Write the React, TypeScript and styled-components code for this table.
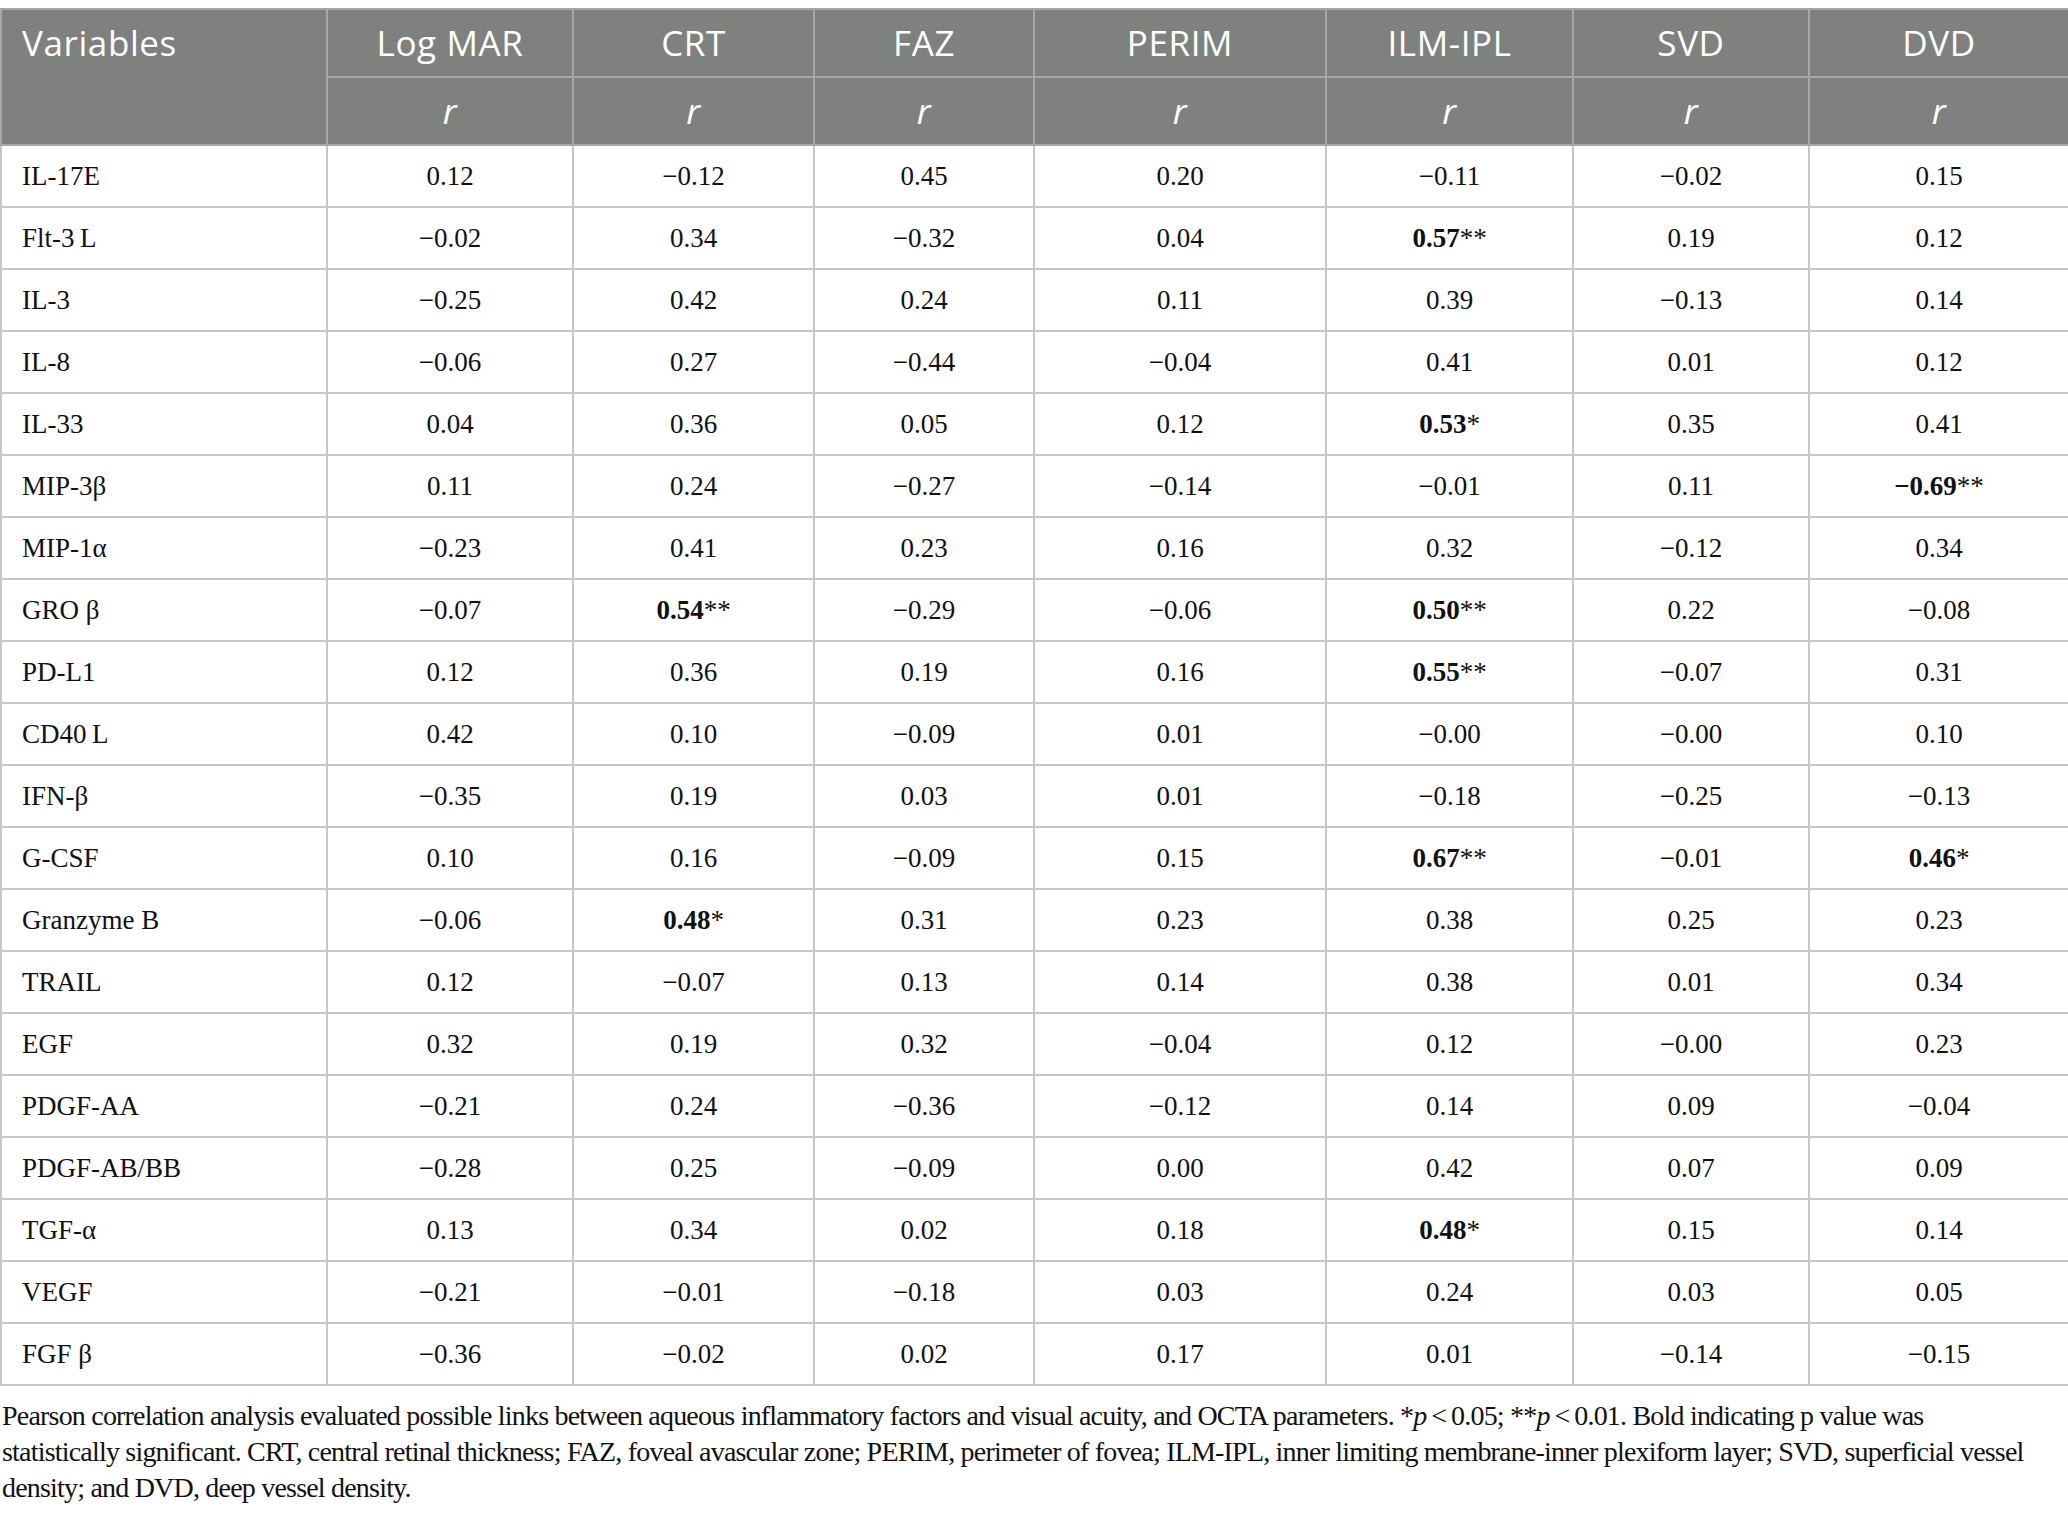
import styled, { createGlobalStyle } from "styled-components"

const GlobalStyle = createGlobalStyle`
	body {
		margin: 0;
		background: #ffffff;
	}
`

const Page = styled.div`
	padding-top: 8px;
	width: 2068px;
`

const Table = styled.table`
	width: 2068px;
	border-collapse: collapse;
	table-layout: fixed;
	border: 2px solid #c4c4c4;
`

const HeadCell = styled.th<{ $left?: boolean }>`
	height: ${({ $left }) => ($left ? "132px" : "66px")};
	padding: 0 0 0 ${({ $left }) => ($left ? "20px" : "0")};
	background: #7f817f;
	border: 2px solid #a6a7a6;
	color: #ffffff;
	font-family: "Open Sans", "Noto Sans", sans-serif;
	font-size: 35px;
	font-weight: 400;
	letter-spacing: 0.6px;
	text-align: ${({ $left }) => ($left ? "left" : "center")};
	vertical-align: ${({ $left }) => ($left ? "top" : "middle")};
	line-height: 66px;
`

const SubHeadCell = styled(HeadCell)`
	font-style: italic;
`

const Cell = styled.td<{ $left?: boolean }>`
	height: 60px;
	padding: 0 0 0 ${({ $left }) => ($left ? "20px" : "0")};
	border: 2px solid #c6c6c6;
	color: #111111;
	font-family: "Liberation Serif", "Times New Roman", serif;
	font-size: 27px;
	text-align: ${({ $left }) => ($left ? "left" : "center")};
	vertical-align: middle;
`

const Strong = styled.b`
	font-weight: 700;
`

const Note = styled.p`
	margin: 12px 0 0;
	padding-left: 2px;
	color: #111111;
	font-family: "Liberation Serif", "Times New Roman", serif;
	font-size: 28px;
	letter-spacing: -0.8px;
	line-height: 36px;
`

const widths = [326, 246, 241, 220, 292, 247, 236, 260]
const heads = ["Log MAR", "CRT", "FAZ", "PERIM", "ILM-IPL", "SVD", "DVD"]

// "!" marks a significant (bold) value
const rows: [string, string[]][] = [
	["IL-17E", ["0.12", "−0.12", "0.45", "0.20", "−0.11", "−0.02", "0.15"]],
	["Flt-3\u2009L", ["−0.02", "0.34", "−0.32", "0.04", "!0.57**", "0.19", "0.12"]],
	["IL-3", ["−0.25", "0.42", "0.24", "0.11", "0.39", "−0.13", "0.14"]],
	["IL-8", ["−0.06", "0.27", "−0.44", "−0.04", "0.41", "0.01", "0.12"]],
	["IL-33", ["0.04", "0.36", "0.05", "0.12", "!0.53*", "0.35", "0.41"]],
	["MIP-3β", ["0.11", "0.24", "−0.27", "−0.14", "−0.01", "0.11", "!−0.69**"]],
	["MIP-1α", ["−0.23", "0.41", "0.23", "0.16", "0.32", "−0.12", "0.34"]],
	["GRO β", ["−0.07", "!0.54**", "−0.29", "−0.06", "!0.50**", "0.22", "−0.08"]],
	["PD-L1", ["0.12", "0.36", "0.19", "0.16", "!0.55**", "−0.07", "0.31"]],
	["CD40\u2009L", ["0.42", "0.10", "−0.09", "0.01", "−0.00", "−0.00", "0.10"]],
	["IFN-β", ["−0.35", "0.19", "0.03", "0.01", "−0.18", "−0.25", "−0.13"]],
	["G-CSF", ["0.10", "0.16", "−0.09", "0.15", "!0.67**", "−0.01", "!0.46*"]],
	["Granzyme B", ["−0.06", "!0.48*", "0.31", "0.23", "0.38", "0.25", "0.23"]],
	["TRAIL", ["0.12", "−0.07", "0.13", "0.14", "0.38", "0.01", "0.34"]],
	["EGF", ["0.32", "0.19", "0.32", "−0.04", "0.12", "−0.00", "0.23"]],
	["PDGF-AA", ["−0.21", "0.24", "−0.36", "−0.12", "0.14", "0.09", "−0.04"]],
	["PDGF-AB/BB", ["−0.28", "0.25", "−0.09", "0.00", "0.42", "0.07", "0.09"]],
	["TGF-α", ["0.13", "0.34", "0.02", "0.18", "!0.48*", "0.15", "0.14"]],
	["VEGF", ["−0.21", "−0.01", "−0.18", "0.03", "0.24", "0.03", "0.05"]],
	["FGF β", ["−0.36", "−0.02", "0.02", "0.17", "0.01", "−0.14", "−0.15"]],
]

const Value = ({ raw }: { raw: string }) => {
	if (!raw.startsWith("!")) return <>{raw}</>
	const m = raw.slice(1).match(/^(.*?)(\**)$/)!
	return (
		<>
			<Strong>{m[1]}</Strong>
			{m[2]}
		</>
	)
}

const App = () => {
	return (
		<Page>
			<GlobalStyle />
			<Table>
				<colgroup>
					{widths.map((w, i) => (
						<col key={i} style={{ width: w }} />
					))}
				</colgroup>
				<thead>
					<tr>
						<HeadCell $left rowSpan={2}>Variables</HeadCell>
						{heads.map((h) => (
							<HeadCell key={h}>{h}</HeadCell>
						))}
					</tr>
					<tr>
						{heads.map((h) => (
							<SubHeadCell key={h}>r</SubHeadCell>
						))}
					</tr>
				</thead>
				<tbody>
					{rows.map(([name, vals]) => (
						<tr key={name}>
							<Cell $left>{name}</Cell>
							{vals.map((v, i) => (
								<Cell key={i}>
									<Value raw={v} />
								</Cell>
							))}
						</tr>
					))}
				</tbody>
			</Table>
			<Note>
				Pearson correlation analysis evaluated possible links between aqueous inflammatory factors and visual acuity, and OCTA parameters. *<i>p</i>{"\u2009<\u2009"}0.05; **<i>p</i>{"\u2009<\u2009"}0.01. Bold indicating p value was
				<br />
				statistically significant. CRT, central retinal thickness; FAZ, foveal avascular zone; PERIM, perimeter of fovea; ILM-IPL, inner limiting membrane-inner plexiform layer; SVD, superficial vessel
				<br />
				density; and DVD, deep vessel density.
			</Note>
		</Page>
	)
}

export default App
